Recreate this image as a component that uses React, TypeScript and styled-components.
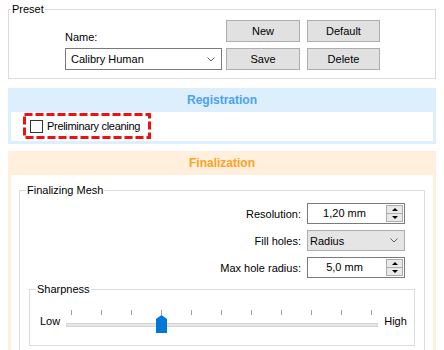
import styled, { createGlobalStyle } from "styled-components";

const GlobalStyle = createGlobalStyle`
    html, body {
        margin: 0;
        padding: 0;
        background: #ffffff;
    }
    body {
        font-family: "Liberation Sans", Arial, sans-serif;
        font-size: 11px;
        color: #000000;
        overflow: hidden;
    }
    * {
        box-sizing: border-box;
    }
`;

const Page = styled.div`
    width: 444px;
    height: 350px;
    overflow: hidden;
    padding: 2px 8px 0;
    display: flex;
    flex-direction: column;
`;

const GroupBox = styled.fieldset<{ $margin?: string }>`
    margin: ${(p) => p.$margin || "0"};
    padding: 0;
    min-width: 0;
    border: 1px solid #dcdcdc;
`;

const Legend = styled.legend<{ $indent: number }>`
    margin-left: ${(p) => p.$indent}px;
    padding: 0 1px;
    line-height: 14px;
    font-size: 11px;
    color: #000;
`;

const PresetBody = styled.div`
    display: flex;
    align-items: flex-end;
    gap: 4px;
    padding: 4px 0 8px 56px;
`;

const NameColumn = styled.div`
    display: flex;
    flex-direction: column;
    gap: 5px;
`;

const ButtonGrid = styled.div`
    display: grid;
    grid-template-columns: 74px 73px;
    column-gap: 7px;
    row-gap: 6px;
`;

const Button = styled.button`
    height: 22px;
    padding: 0;
    border: 1px solid #adadad;
    background: #e1e1e1;
    font: inherit;
    color: #000;
`;

const Combo = styled.div<{ $width?: number; $flat?: boolean }>`
    width: ${(p) => (p.$width ? `${p.$width}px` : "auto")};
    height: ${(p) => (p.$flat ? 21 : 22)}px;
    display: flex;
    align-items: center;
    justify-content: space-between;
    padding: 0 6px 0 ${(p) => (p.$flat ? 2 : 5)}px;
    border: 1px solid ${(p) => (p.$flat ? "#adadad" : "#7a7a7a")};
    background: ${(p) => (p.$flat ? "#e5e5e5" : "#ffffff")};
`;

const Section = styled.section<{ $bg: string; $grow?: boolean; $top: number }>`
    margin-top: ${(p) => p.$top}px;
    flex: ${(p) => (p.$grow ? 1 : "none")};
    display: flex;
    flex-direction: column;
    padding: 0 3px ${(p) => (p.$grow ? 0 : 3)}px;
    background: ${(p) => p.$bg};
`;

const SectionTitle = styled.div<{ $color: string }>`
    height: 24px;
    line-height: 24px;
    text-align: center;
    font-size: 12px;
    font-weight: bold;
    color: ${(p) => p.$color};
`;

const RegBody = styled.div`
    height: 29px;
    padding: 1px 0 0 12px;
    background: #ffffff;
`;

const Annotated = styled.label`
    position: relative;
    width: 128px;
    height: 26px;
    display: flex;
    align-items: center;
    gap: 4px;
    padding-left: 7px;
    white-space: nowrap;
    letter-spacing: -0.3px;
    svg {
        position: absolute;
        left: 0;
        top: 0;
    }
`;

const Checkbox = styled.span`
    width: 13px;
    height: 13px;
    border: 1px solid #333333;
    background: #ffffff;
`;

const FinalBody = styled.div`
    flex: 1;
    padding: 8px 8px 0;
    background: #ffffff;
`;

const MeshBody = styled.div`
    padding: 6px 0 30px;
`;

const FieldGrid = styled.div`
    display: grid;
    grid-template-columns: 1fr 98px;
    column-gap: 6px;
    row-gap: 6px;
    align-items: center;
    padding-right: 19px;
`;

const FieldLabel = styled.span`
    text-align: right;
`;

const SpinBox = styled.div`
    height: 21px;
    display: flex;
    border: 1px solid #7a7a7a;
    background: #ffffff;
    span {
        flex: 1;
        text-align: center;
        line-height: 19px;
        padding-right: 4px;
    }
`;

const SpinButtons = styled.div`
    width: 17px;
    margin: 1px;
    display: flex;
    flex-direction: column;
    border: 1px solid #acacac;
    background: #e9e9e9;
`;

const SpinHalf = styled.div`
    flex: 1;
    display: flex;
    align-items: center;
    justify-content: center;
    & + & {
        border-top: 1px solid #acacac;
    }
`;

const Arrow = styled.i<{ $down?: boolean }>`
    width: 0;
    height: 0;
    border-left: 3px solid transparent;
    border-right: 3px solid transparent;
    ${(p) => (p.$down ? "border-top: 3px solid #000;" : "border-bottom: 3px solid #000;")}
`;

const SharpBody = styled.div`
    display: flex;
    align-items: center;
    gap: 6px;
    padding: 10px 0 9px 10px;
`;

function Chevron() {
    return (
        <svg width="8" height="5" viewBox="0 0 8 5">
            <polyline points="0.5,0.5 4,4 7.5,0.5" fill="none" stroke="#606060" strokeWidth="1" />
        </svg>
    );
}

function Spin({ value }: { value: string }) {
    return (
        <SpinBox>
            <span>{value}</span>
            <SpinButtons>
                <SpinHalf><Arrow /></SpinHalf>
                <SpinHalf><Arrow $down /></SpinHalf>
            </SpinButtons>
        </SpinBox>
    );
}

function Slider({ value }: { value: number }) {
    const ticks = Array.from({ length: 11 }, (_, i) => i);
    const x = 5 + value * 30;
    return (
        <svg width="312" height="30" viewBox="0 0 312 30">
            {ticks.map((i) => (
                <rect key={i} x={5 + i * 30} y="4" width="1" height="5" fill="#a0a0a0" />
            ))}
            <rect x="0.5" y="17.5" width="311" height="3" fill="#e7e7e7" stroke="#d4d4d4" />
            <path d={`M${x - 5} 13 L${x + 0.5} 9 L${x + 6} 13 V27 H${x - 5} Z`} fill="#0078d7" />
        </svg>
    );
}

export default function App() {
    return (
        <>
            <GlobalStyle />
            <Page>
                <GroupBox>
                    <Legend $indent={2}>Preset</Legend>
                    <PresetBody>
                        <NameColumn>
                            <span>Name:</span>
                            <Combo $width={157}>
                                <span>Calibry Human</span>
                                <Chevron />
                            </Combo>
                        </NameColumn>
                        <ButtonGrid>
                            <Button>New</Button>
                            <Button>Default</Button>
                            <Button>Save</Button>
                            <Button>Delete</Button>
                        </ButtonGrid>
                    </PresetBody>
                </GroupBox>

                <Section $bg="#ddeefc" $top={9}>
                    <SectionTitle $color="#4aa3f2">Registration</SectionTitle>
                    <RegBody>
                        <Annotated>
                            <Checkbox />
                            Preliminary cleaning
                            <svg width="128" height="26" viewBox="0 0 128 26">
                                <rect x="1.5" y="1.5" width="125" height="23" fill="none" stroke="#ee1111" strokeWidth="3" strokeDasharray="8 3" />
                            </svg>
                        </Annotated>
                    </RegBody>
                </Section>

                <Section $bg="#ffefdc" $top={7} $grow>
                    <SectionTitle $color="#ffa21f">Finalization</SectionTitle>
                    <FinalBody>
                        <GroupBox>
                            <Legend $indent={6}>Finalizing Mesh</Legend>
                            <MeshBody>
                                <FieldGrid>
                                    <FieldLabel>Resolution:</FieldLabel>
                                    <Spin value="1,20 mm" />
                                    <FieldLabel>Fill holes:</FieldLabel>
                                    <Combo $flat>
                                        <span>Radius</span>
                                        <Chevron />
                                    </Combo>
                                    <FieldLabel>Max hole radius:</FieldLabel>
                                    <Spin value="5,0 mm" />
                                </FieldGrid>
                                <GroupBox $margin="4px 9px 0">
                                    <Legend $indent={6}>Sharpness</Legend>
                                    <SharpBody>
                                        <span>Low</span>
                                        <Slider value={3} />
                                        <span>High</span>
                                    </SharpBody>
                                </GroupBox>
                            </MeshBody>
                        </GroupBox>
                    </FinalBody>
                </Section>
            </Page>
        </>
    );
}
